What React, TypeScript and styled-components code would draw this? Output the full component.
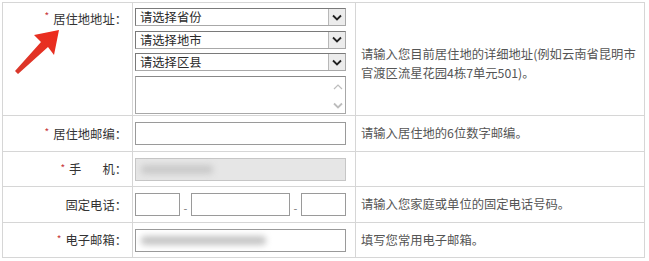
import styled, { createGlobalStyle } from "styled-components";

const GlobalStyle = createGlobalStyle`
    body {
        margin: 0;
        background: #fff;
        font-family: 'Noto Sans CJK SC', 'Noto Sans', sans-serif;
    }
`

const Page = styled.div`
    position: relative;
    width: 649px;
    height: 261px;
    padding: 2px 0 0 2px;
    box-sizing: border-box;
    overflow: hidden;
`

const Form = styled.div`
    display: grid;
    grid-template-columns: 130px 223px 289px;
    grid-template-rows: 113px 36px 35px 36px 35px;
    width: fit-content;
    border-top: 1px solid #d6d6d6;
    border-left: 1px solid #d6d6d6;
`

const Cell = styled.div`
    box-sizing: border-box;
    border-right: 1px solid #d6d6d6;
    border-bottom: 1px solid #d6d6d6;
    display: flex;
`

const Label = styled(Cell)<{ $top?: boolean }>`
    justify-content: flex-end;
    align-items: ${p => p.$top ? 'flex-start' : 'center'};
    padding: ${p => p.$top ? '7px 5px 0 0' : '0 5px 0 0'};
    font-size: 12.3px;
    color: #333;
    white-space: nowrap;
`

const Star = styled.span`
    color: #c8393b;
    font-size: 10px;
    margin-right: 4px;
    position: relative;
    top: -2px;
`

const Spacer = styled.span<{ $w: number }>`
    display: inline-block;
    width: ${p => p.$w}px;
`

const Field = styled(Cell)<{ $stack?: boolean }>`
    padding: ${p => p.$stack ? '5px 0 0 2px' : '0 0 0 2px'};
    flex-direction: ${p => p.$stack ? 'column' : 'row'};
    align-items: ${p => p.$stack ? 'flex-start' : 'center'};
    gap: ${p => p.$stack ? '4.5px' : '0'};
`

const Hint = styled(Cell)<{ $lines?: boolean }>`
    align-items: center;
    padding: ${p => p.$lines ? '9px 0 0 5px' : '0 0 0 5px'};
    font-size: 12.3px;
    line-height: 19px;
    color: #555;
`

const Select = styled.div`
    box-sizing: border-box;
    width: 211px;
    height: 18px;
    display: flex;
    border: 1px solid #a8a8a8;
    border-top-color: #7a7a7a;
    border-left-color: #7a7a7a;
    background: #fff;
`

const SelectText = styled.span`
    flex: 1;
    padding-left: 4px;
    font-size: 12.3px;
    line-height: 16px;
    color: #2a2a2a;
`

const DropButton = styled.span`
    width: 16px;
    display: grid;
    place-items: center;
    background: #ececec;
    border-left: 1px solid #b8b8b8;
`

const Memo = styled.div`
    box-sizing: border-box;
    width: 211px;
    height: 38px;
    border: 1px solid #a8a8a8;
    border-top-color: #888;
    display: flex;
    justify-content: flex-end;
`

const ScrollTrack = styled.div`
    width: 14px;
    display: flex;
    flex-direction: column;
    justify-content: space-between;
    align-items: center;
    padding: 6px 0 4px;
`

const Input = styled.div<{ $w: number; $disabled?: boolean }>`
    box-sizing: border-box;
    width: ${p => p.$w}px;
    height: 23px;
    border: 1px solid ${p => p.$disabled ? '#c6c6c6' : '#9a9a9a'};
    background: ${p => p.$disabled ? '#e6e6e6' : '#fff'};
    display: flex;
    align-items: center;
    padding-left: 5px;
`

const Dash = styled.span`
    width: 11px;
    text-align: center;
    font-size: 11px;
    color: #777;
    padding-top: 7px;
`

const Blur = styled.span<{ $w: number; $tone: string }>`
    display: inline-block;
    width: ${p => p.$w}px;
    height: 9px;
    background: ${p => p.$tone};
    filter: blur(3px);
    border-radius: 4px;
`

const Arrow = styled.svg`
    position: absolute;
    left: 0;
    top: 0;
    pointer-events: none;
`

const Chevron = ({ up, color }: { up?: boolean; color: string }) => (
    <svg width="10" height="7" viewBox="0 0 10 7">
        <path d={up ? "M1 6 L5 2 L9 6" : "M1 1.5 L5 5.5 L9 1.5"} fill="none" stroke={color} strokeWidth={up ? 1.2 : 1.8} />
    </svg>
)

const regions = ["请选择省份", "请选择地市", "请选择区县"];

const App = () => {
    return (
        <Page>
            <GlobalStyle />
            <Form>
                <Label $top><Star>*</Star>居住地地址：</Label>
                <Field $stack>
                    {regions.map(r => (
                        <Select key={r}>
                            <SelectText>{r}</SelectText>
                            <DropButton><Chevron color="#222" /></DropButton>
                        </Select>
                    ))}
                    <Memo>
                        <ScrollTrack>
                            <Chevron up color="#bdbdbd" />
                            <Chevron color="#bdbdbd" />
                        </ScrollTrack>
                    </Memo>
                </Field>
                <Hint $lines>
                    请输入您目前居住地的详细地址(例如云南省昆明市<br />官渡区流星花园4栋7单元501)。
                </Hint>

                <Label><Star>*</Star>居住地邮编：</Label>
                <Field><Input $w={211} /></Field>
                <Hint>请输入居住地的6位数字邮编。</Hint>

                <Label><Star>*</Star>手<Spacer $w={21} />机：</Label>
                <Field>
                    <Input $w={211} $disabled><Blur $w={72} $tone="#c9c9c9" /></Input>
                </Field>
                <Hint />

                <Label>固定电话：</Label>
                <Field>
                    <Input $w={45} />
                    <Dash>-</Dash>
                    <Input $w={99} />
                    <Dash>-</Dash>
                    <Input $w={45} />
                </Field>
                <Hint>请输入您家庭或单位的固定电话号码。</Hint>

                <Label><Star>*</Star>电子邮箱：</Label>
                <Field>
                    <Input $w={211}><Blur $w={125} $tone="#c4c4c4" /></Input>
                </Field>
                <Hint>填写您常用电子邮箱。</Hint>
            </Form>
            <Arrow width="649" height="261" viewBox="0 0 649 261">
                <defs>
                    <linearGradient id="arrowRed" x1="0" y1="1" x2="1" y2="0">
                        <stop offset="0" stopColor="#d8392c" />
                        <stop offset="1" stopColor="#ee2a1c" />
                    </linearGradient>
                </defs>
                <polygon
                    points="59,30 34,35 41,42 15,71 18,74 48,47 54,55"
                    fill="url(#arrowRed)"
                />
            </Arrow>
        </Page>
    );
}

export default App;
